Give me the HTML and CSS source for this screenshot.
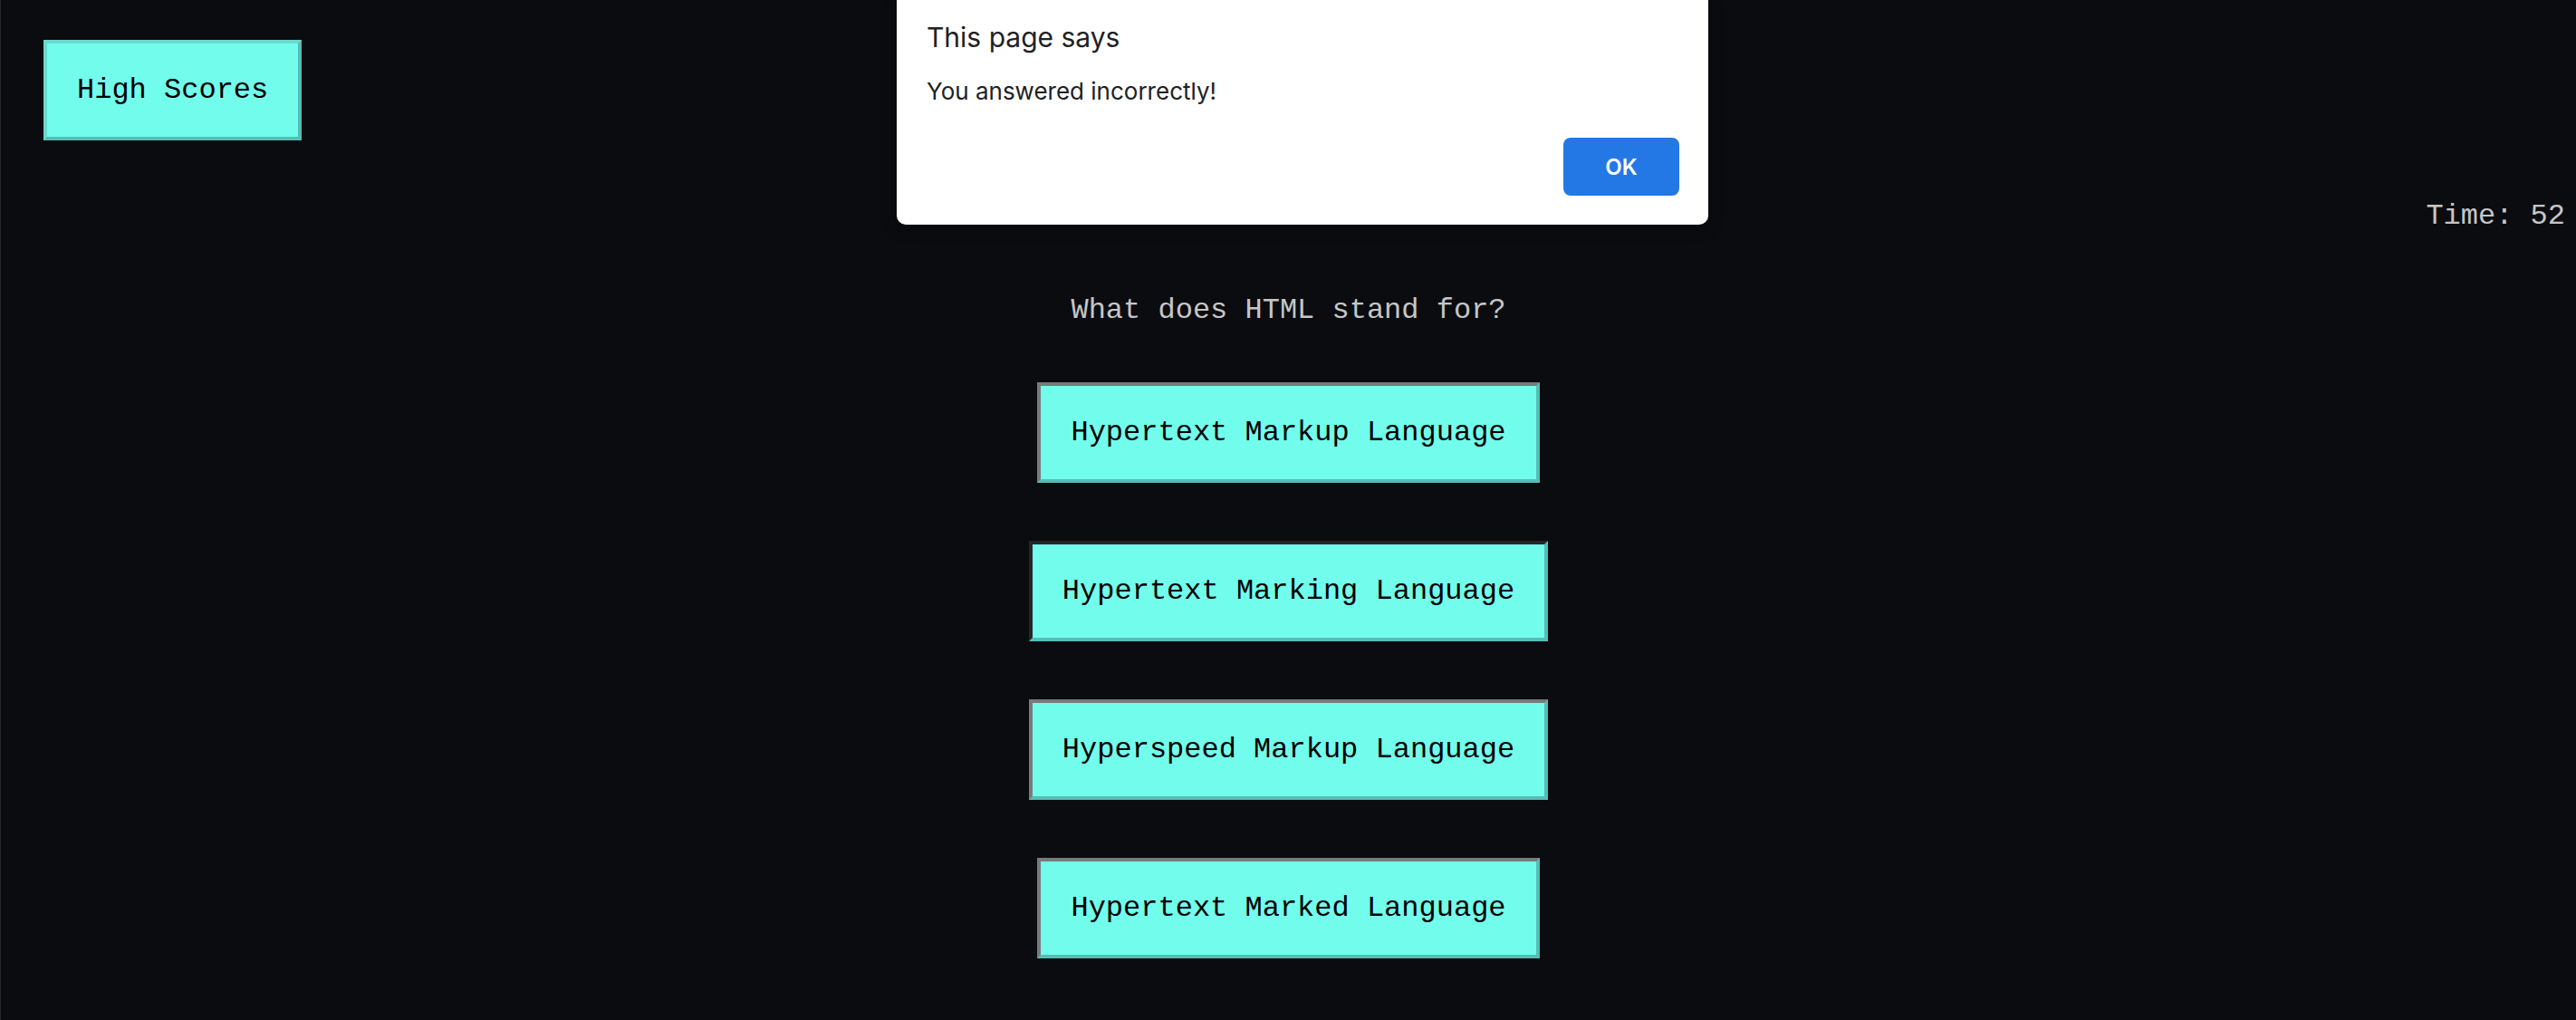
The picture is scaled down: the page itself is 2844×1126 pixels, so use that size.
FILE: index.html
```html
<!DOCTYPE html>
<html lang="en">
<head>
<meta charset="utf-8">
<title>Code Quiz</title>
<link rel="stylesheet" href="styles.css">
</head>
<body>
  <header class="top-bar">
    <button class="quiz-btn scores-btn">High Scores</button>
  </header>
  <div class="timer">Time: 52</div>
  <main class="quiz">
    <h2 class="question">What does HTML stand for?</h2>
    <div class="answers">
      <button class="quiz-btn answer">Hypertext Markup Language</button>
      <button class="quiz-btn answer answer-focus">Hypertext Marking Language</button>
      <button class="quiz-btn answer">Hyperspeed Markup Language</button>
      <button class="quiz-btn answer">Hypertext Marked Language</button>
    </div>
  </main>
  <div class="dialog" role="alertdialog">
    <div class="dialog-title">This page says</div>
    <div class="dialog-message">You answered incorrectly!</div>
    <div class="dialog-actions">
      <button class="dialog-ok">OK</button>
    </div>
  </div>
</body>
</html>
```
FILE: styles.css
```css
html, body {
  margin: 0;
  padding: 0;
}

body {
  background: #0b0c10;
  border-left: 1px solid #26272b;
  min-height: 1126px;
  box-sizing: border-box;
  font-family: "Liberation Mono", "Courier New", monospace;
  color: #c5c6c7;
  position: relative;
}

.top-bar {
  padding: 44px 0 0 47px;
  display: flex;
}

.quiz-btn {
  font-family: "Liberation Mono", "Courier New", monospace;
  font-size: 32px;
  line-height: 36px;
  color: #000;
  background: #72fcec;
  padding: 34px 33px 33px;
  border: 4px solid;
  border-color: #7a7a7a #55bdb5 #55bdb5 #7a7a7a;
  margin: 0;
  white-space: nowrap;
}

.scores-btn {
  border-color: #6cd9cf #55bdb5 #55bdb5 #6cd9cf;
}

.answer-focus {
  border-color: #262626 #55bdb5 #55bdb5 #262626;
}

.timer {
  margin-top: 66px;
  padding-right: 12px;
  text-align: right;
  font-size: 32px;
  line-height: 36px;
  color: #c5c6c7;
}

.quiz {
  display: flex;
  flex-direction: column;
  align-items: center;
}

.question {
  margin: 68px 0 0;
  font-size: 32px;
  line-height: 36px;
  font-weight: normal;
  color: #c5c6c7;
  text-align: center;
}

.answers {
  margin-top: 61px;
  display: flex;
  flex-direction: column;
  align-items: center;
  gap: 64px;
}

.dialog {
  position: absolute;
  left: 989px;
  top: 0;
  width: 896px;
  height: 248px;
  box-sizing: border-box;
  padding: 23px 32px 32px 33px;
  background: #ffffff;
  border-radius: 0 0 10px 10px;
  box-shadow: 0 4px 16px rgba(0, 0, 0, 0.35);
  display: flex;
  flex-direction: column;
  font-family: Inter, "Noto Sans", sans-serif;
  color: #202124;
}

.dialog-title {
  font-size: 30px;
  line-height: 36px;
}

.dialog-message {
  margin-top: 26px;
  font-size: 26px;
  line-height: 32px;
}

.dialog-actions {
  margin-top: auto;
  display: flex;
  justify-content: flex-end;
}

.dialog-ok {
  width: 128px;
  height: 64px;
  border: none;
  border-radius: 8px;
  background: #2478e6;
  color: #ffffff;
  font-family: Inter, "Noto Sans", sans-serif;
  font-size: 24px;
  font-weight: 600;
  padding: 0;
}
```
